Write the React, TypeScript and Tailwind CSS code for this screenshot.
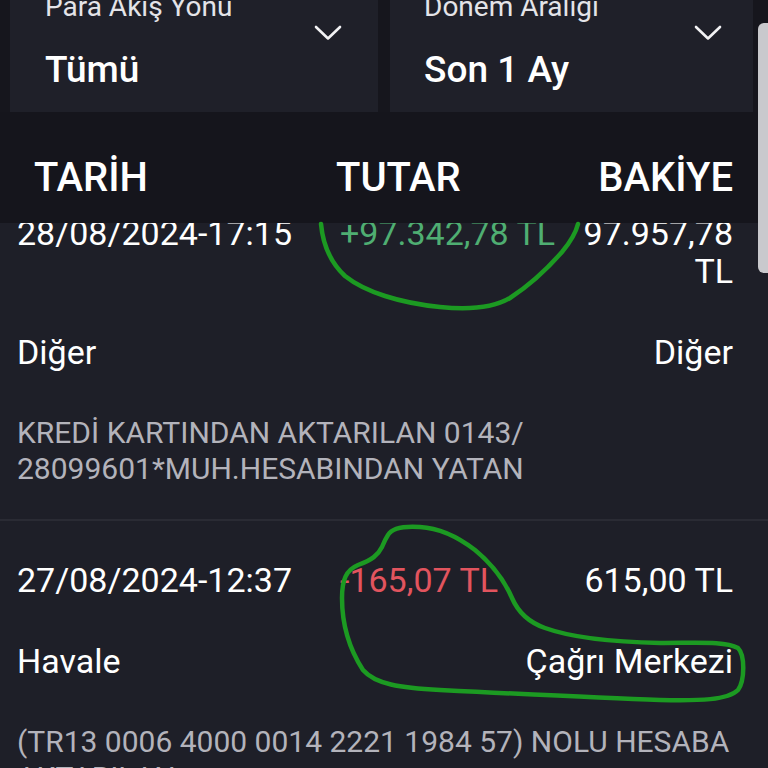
import React from "react";

type Tx = {
  date: string;
  amount: string;
  positive: boolean;
  balance: string;
  type: string;
  channel: string;
  desc: string[];
};

const txs: Tx[] = [
  {
    date: "28/08/2024-17:15",
    amount: "+97.342,78 TL",
    positive: true,
    balance: "97.957,78 TL",
    type: "Diğer",
    channel: "Diğer",
    desc: ["KREDİ KARTINDAN AKTARILAN 0143/", "28099601*MUH.HESABINDAN YATAN"],
  },
  {
    date: "27/08/2024-12:37",
    amount: "-165,07 TL",
    positive: false,
    balance: "615,00 TL",
    type: "Havale",
    channel: "Çağrı Merkezi",
    desc: ["(TR13 0006 4000 0014 2221 1984 57) NOLU HESABA", "AKTARILAN"],
  },
];

function Chevron() {
  return (
    <svg width="28" height="16" viewBox="0 0 28 16" className="mt-[25px] shrink-0">
      <polyline points="2,2 14,13.5 26,2" fill="none" stroke="#f2f2f4" strokeWidth="2.6" strokeLinecap="round" strokeLinejoin="round" />
    </svg>
  );
}

function Dropdown({ label, value, className }: { label: string; value: string; className: string }) {
  return (
    <div className={`flex h-full justify-between bg-[#1f2029] ${className}`}>
      <div className="-mt-[9px] flex flex-col">
        <span className="text-[28px] leading-[32px] text-[#e4e4e8]">{label}</span>
        <span className="mt-[25px] text-[37px] font-medium leading-[44px] text-white">{value}</span>
      </div>
      <Chevron />
    </div>
  );
}

function Row({ tx }: { tx: Tx }) {
  return (
    <div className="border-b-2 border-[#2a2b34] px-[17px] pb-[32px] pt-[40px]">
      <div className="mr-[18px] grid grid-cols-[323px_1fr_160px] text-[34px] leading-[38px]">
        <div>{tx.date}</div>
        <div className={tx.positive ? "text-[#4fae72]" : "text-[#e2545e]"}>{tx.amount}</div>
        <div className="text-right">{tx.balance}</div>
      </div>
      <div className="mr-[18px] mt-[43px] flex justify-between text-[34px] leading-[38px]">
        <span>{tx.type}</span>
        <span>{tx.channel}</span>
      </div>
      <div className="mt-[44px] text-[30px] leading-[36px] text-[#b3b3bb]">
        {tx.desc.map((l, i) => (
          <div key={i} className="whitespace-nowrap">{l}</div>
        ))}
      </div>
    </div>
  );
}

export default function App() {
  return (
    <div className="relative h-[768px] w-[768px] overflow-hidden bg-[#1e1f28] font-[Roboto,sans-serif] text-white">
      <div className="flex h-[112px] gap-[12px] bg-[#16161d] pl-[10px] pr-[15px]">
        <Dropdown label="Para Akış Yönü" value="Tümü" className="w-[368px] pl-[35px] pr-[36px]" />
        <Dropdown label="Dönem Aralığı" value="Son 1 Ay" className="flex-1 pl-[34px] pr-[31px]" />
      </div>

      <div className="grid h-[111px] grid-cols-[302px_1fr_auto] bg-[#15151c] pl-[34px] pr-[35px] pt-[46px] text-[40px] font-medium leading-[40px]">
        <div>TARİH</div>
        <div>TUTAR</div>
        <div>BAKİYE</div>
      </div>

      <div className="h-[545px] overflow-hidden">
        <div className="-mt-[49px]">
          {txs.map((tx) => (
            <Row key={tx.date} tx={tx} />
          ))}
        </div>
      </div>

      {/* hand drawn marks */}
      <svg className="pointer-events-none absolute left-0 top-0" width="768" height="768" viewBox="0 0 768 768">
        <path
          d="M321,224 C323,245 330,262 345,276 C365,292 400,303 440,307 C470,310 495,307 510,298 C530,285 548,268 562,252 C572,240 576,232 578,224"
          fill="none"
          stroke="#1c9a22"
          strokeWidth="4.5"
          strokeLinecap="round"
        />
        <path
          d="M388,535 C392,528 405,526 420,527 C440,528 458,537 475,550 C492,564 505,582 512,598 C518,612 528,622 545,628 C570,637 610,642 660,643 C700,643 725,641 738,648 C745,655 745,680 738,690 C728,700 700,701 660,700 C600,698 520,694 440,690 C400,688 375,684 363,670 C350,650 342,625 342,598 C342,580 346,570 358,565 C372,560 378,555 382,547 C384,542 386,538 388,535 Z"
          fill="none"
          stroke="#1c9a22"
          strokeWidth="4.5"
          strokeLinejoin="round"
        />
      </svg>

      <div className="absolute right-0 top-[23px] h-[250px] w-[10px] rounded-l-[6px] bg-[#c9c9cd]" />
    </div>
  );
}
